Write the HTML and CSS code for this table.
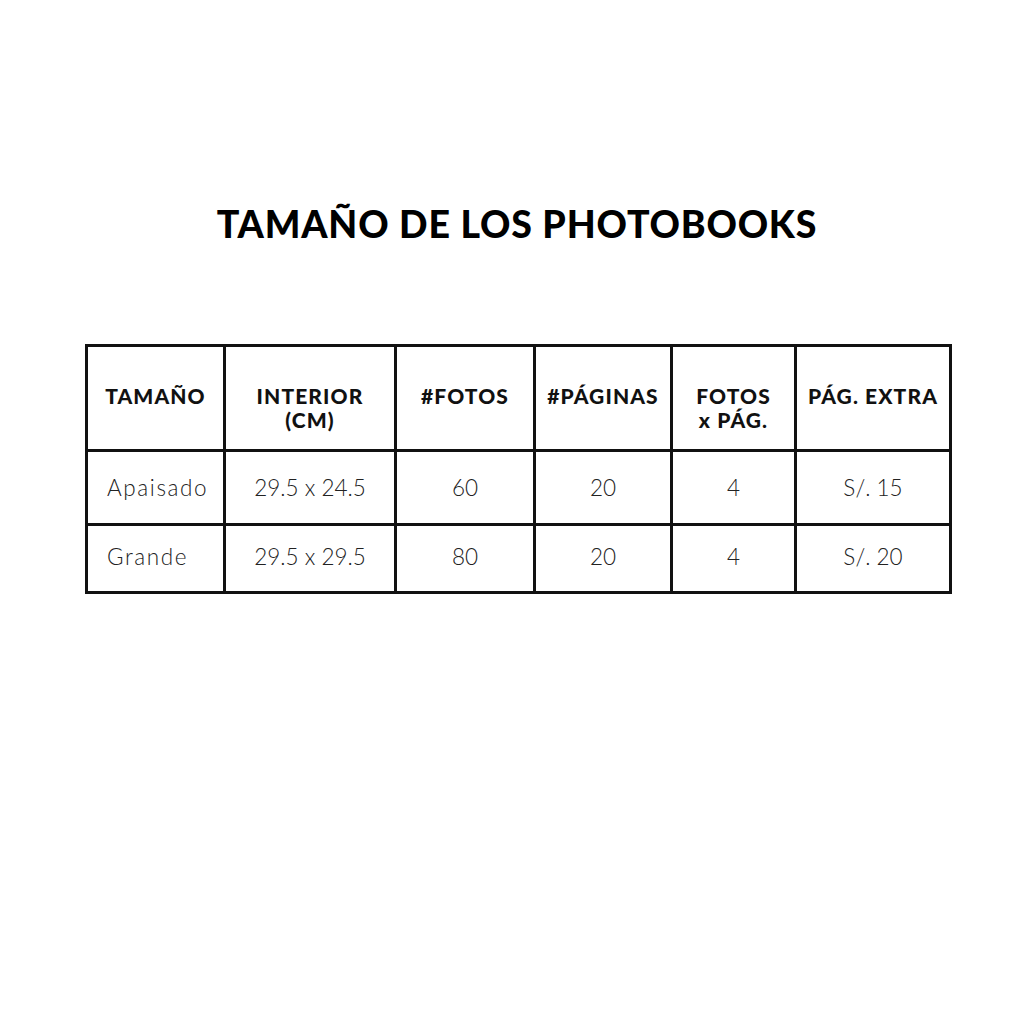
FILE: index.html
```html
<!DOCTYPE html>
<html lang="es">
<head>
<meta charset="utf-8">
<title>Tamaño de los photobooks</title>
<link rel="stylesheet" href="styles.css">
</head>
<body>
<main class="page">
  <h1 class="title">TAMAÑO DE LOS PHOTOBOOKS</h1>
  <table class="sizes">
    <colgroup>
      <col class="c1"><col class="c2"><col class="c3"><col class="c4"><col class="c5"><col class="c6">
    </colgroup>
    <thead>
      <tr>
        <th>TAMAÑO</th>
        <th>INTERIOR<br>(CM)</th>
        <th>#FOTOS</th>
        <th>#PÁGINAS</th>
        <th>FOTOS<br>x PÁG.</th>
        <th>PÁG. EXTRA</th>
      </tr>
    </thead>
    <tbody>
      <tr class="r1">
        <td class="name">Apaisado</td>
        <td>29.5 x 24.5</td>
        <td>60</td>
        <td>20</td>
        <td>4</td>
        <td>S/. 15</td>
      </tr>
      <tr class="r2">
        <td class="name">Grande</td>
        <td>29.5 x 29.5</td>
        <td>80</td>
        <td>20</td>
        <td>4</td>
        <td>S/. 20</td>
      </tr>
    </tbody>
  </table>
</main>
</body>
</html>
```
FILE: styles.css
```css
html, body {
  margin: 0;
  padding: 0;
  background: #ffffff;
}
body {
  font-family: "Lato", "Noto Sans", "Liberation Sans", sans-serif;
  color: #1c1c1c;
}
.page {
  width: 1024px;
  height: 1024px;
  padding-top: 198px;
  box-sizing: border-box;
  display: flex;
  flex-direction: column;
  align-items: center;
}
.title {
  margin: 0 0 0 10px;
  font-size: 37.5px;
  font-weight: 900;
  line-height: 52px;
  color: #000;
  letter-spacing: 0.8px;
}
.sizes {
  margin-top: 94px;
  margin-left: 13px;
  border-collapse: collapse;
  table-layout: fixed;
  width: 867px;
}
.c1 { width: 138px; }
.c2 { width: 171px; }
.c3 { width: 139px; }
.c4 { width: 137px; }
.c5 { width: 124px; }
.c6 { width: 155px; }
.sizes th, .sizes td {
  border: 3px solid #111;
  padding: 0;
  text-align: center;
}
.sizes th {
  height: 105px;
  vertical-align: top;
  padding-top: 37px;
  box-sizing: border-box;
  font-size: 21px;
  line-height: 24px;
  font-weight: 900;
  letter-spacing: 1.1px;
  color: #111;
}
.sizes td {
  vertical-align: middle;
  font-size: 22.5px;
  font-weight: 300;
  color: #222;
}
.r1 td { height: 71px; }
.r2 td {
  height: 68px;
  padding-bottom: 4px;
  box-sizing: border-box;
}
.sizes td.name {
  text-align: left;
  padding-left: 19px;
  letter-spacing: 1.6px;
}
```
